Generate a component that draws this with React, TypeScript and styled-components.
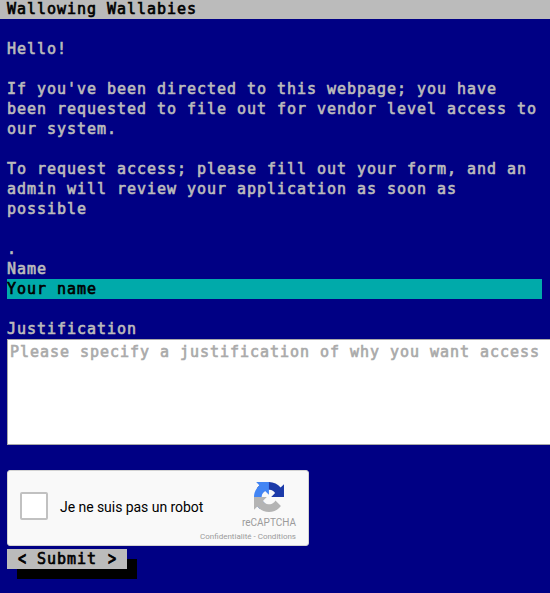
import React from "react";
import styled, { createGlobalStyle } from "styled-components";

const GlobalStyle = createGlobalStyle`
  body {
    margin: 0;
    background: #000084;
    overflow: hidden;
  }
  * { box-sizing: border-box; }
`;

const terminalFont = `
  font-family: "DejaVu Sans Mono", "Liberation Mono", monospace;
  font-size: 15px;
  line-height: 20px;
  letter-spacing: 0.97px;
  -webkit-text-stroke: 0.65px currentColor;
`;

const Page = styled.div`
  ${terminalFont}
  width: 550px;
  height: 593px;
  overflow: hidden;
  background: #000084;
  color: #bbbbbb;
`;

const TitleBar = styled.header`
  height: 19px;
  padding-left: 7px;
  background: #bbbbbb;
  color: #000;
  line-height: 18px;
`;

const Content = styled.main`
  padding: 20px 8px 0 7px;
`;

const Paragraph = styled.p`
  margin: 0 0 20px;
  white-space: nowrap;
`;

const Form = styled.form`
  display: flex;
  flex-direction: column;
  align-items: flex-start;
`;

const Label = styled.label`
  display: block;
  height: 20px;
`;

const NameInput = styled.input`
  ${terminalFont}
  width: 100%;
  height: 20px;
  margin: 0 0 20px;
  padding: 0;
  border: 0;
  border-radius: 0;
  outline: 0;
  background: #00aaaa;
  color: #000;
  &::placeholder { color: #000; opacity: 1; }
`;

const Justification = styled.textarea`
  ${terminalFont}
  flex: none;
  width: 620px;
  height: 106px;
  margin: 0 0 25px;
  padding: 2px;
  border: 1px solid #a9a9a9;
  border-radius: 0;
  outline: 0;
  resize: none;
  background: #fff;
  &::placeholder { color: #aaaaaa; opacity: 1; }
`;

const Captcha = styled.div`
  display: flex;
  width: 302px;
  height: 76px;
  margin-bottom: 3px;
  padding: 0 12px;
  border: 1px solid #d3d3d3;
  border-radius: 3px;
  background: #f9f9f9;
  font-family: Roboto, sans-serif;
  letter-spacing: 0;
  -webkit-text-stroke: 0;
`;

const CheckBox = styled.span`
  flex: none;
  width: 28px;
  height: 28px;
  margin-top: 21px;
  border: 2px solid #c1c1c1;
  border-radius: 2px;
  background: #fff;
`;

/* The label and the brand share one cell, since the brand's links reach under the label. */
const CaptchaBody = styled.div`
  display: grid;
  flex: none;
  width: 248px;
  > * { grid-area: 1 / 1; }
`;

const CaptchaLabel = styled.span`
  margin: 26px 0 0 12px;
  color: #000;
  font-size: 14px;
  letter-spacing: -0.05px;
  white-space: nowrap;
`;

const Brand = styled.div`
  display: flex;
  flex-direction: column;
  align-items: flex-end;
  width: 97px;
  margin-left: auto;
  padding-top: 11px;
  color: #9b9b9b;
  white-space: nowrap;
`;

const Logo = styled.svg`
  width: 30px;
  height: 30px;
  margin-right: 12px;
`;

const BrandName = styled.span`
  margin-top: 4px;
  font-size: 10px;
  line-height: 14px;
`;

const Links = styled.span`
  margin-top: 2px;
  font-size: 8px;
  line-height: 10px;
`;

const Submit = styled.button`
  ${terminalFont}
  width: 120px;
  height: 20px;
  padding: 0 0 0 10px;
  border: 0;
  background: #bbbbbb;
  color: #000;
  text-align: left;
  white-space: nowrap;
  box-shadow: 10px 10px 0 #000;
`;

const Bracket = styled.span`
  display: inline-block;
  transform: translate(0.5px, -1px) scale(0.9, 1.35);
`;

export default function App() {
  return (
    <Page>
      <GlobalStyle />
      <TitleBar>Wallowing Wallabies</TitleBar>
      <Content>
        <Paragraph>Hello!</Paragraph>
        <Paragraph>
          If you've been directed to this webpage; you have<br />
          been requested to file out for vendor level access to<br />
          our system.
        </Paragraph>
        <Paragraph>
          To request access; please fill out your form, and an<br />
          admin will review your application as soon as<br />
          possible
        </Paragraph>
        <Form onSubmit={(e) => e.preventDefault()}>
          <Label as="div">.</Label>
          <Label htmlFor="name">Name</Label>
          <NameInput id="name" placeholder="Your name" />
          <Label htmlFor="why">Justification</Label>
          <Justification
            id="why"
            placeholder="Please specify a justification of why you want access"
          />
          <Captcha>
            <CheckBox />
            <CaptchaBody>
              <CaptchaLabel>Je ne suis pas un robot</CaptchaLabel>
              <Brand>
                <Logo viewBox="0 0 64 64">
                  <path fill="#1c3aa9" d="M64 31.955l-.033-1.37V4.687l-7.16 7.16C50.948 4.674 42.033.093 32.05.093c-10.389 0-19.622 4.96-25.458 12.64l11.736 11.86a15.55 15.55 0 0 1 4.754-5.334c2.05-1.6 4.952-2.906 8.968-2.906.485 0 .86.057 1.135.163 4.976.393 9.288 3.14 11.828 7.124l-8.307 8.307L64 31.953" />
                  <path fill="#4285f4" d="M31.862.094l-1.37.033H4.594l7.16 7.16C4.58 13.147 0 22.06 0 32.046c0 10.388 4.96 19.622 12.64 25.458L24.5 45.768a15.55 15.55 0 0 1-5.334-4.754c-1.6-2.05-2.906-4.952-2.906-8.968 0-.485.057-.86.163-1.135.393-4.976 3.14-9.288 7.124-11.828l8.307 8.307L31.86.095" />
                  <path fill="#b4b4b4" d="M.001 32.045l.033 1.37v25.898l7.16-7.16c5.86 7.173 14.774 11.754 24.76 11.754 10.388 0 19.622-4.96 25.458-12.64l-11.736-11.86a15.55 15.55 0 0 1-4.754 5.334c-2.05 1.6-4.952 2.906-8.968 2.906-.485 0-.86-.057-1.135-.163-4.976-.393-9.288-3.14-11.828-7.124l8.307-8.307L.001 32.045" />
                </Logo>
                <BrandName>reCAPTCHA</BrandName>
                <Links>Confidentialité - Conditions</Links>
              </Brand>
            </CaptchaBody>
          </Captcha>
          <Submit>
            <Bracket>&lt;</Bracket> Submit <Bracket>&gt;</Bracket>
          </Submit>
        </Form>
      </Content>
    </Page>
  );
}
